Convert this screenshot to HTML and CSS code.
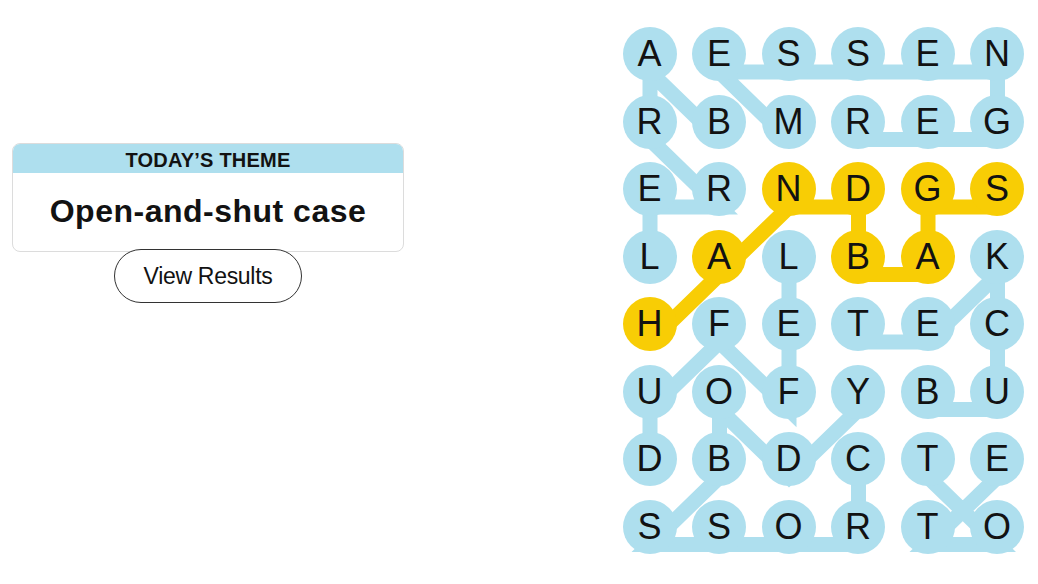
FILE: index.html
```html
<!DOCTYPE html>
<html lang="en">
<head>
<meta charset="utf-8">
<title>Strands</title>
<link rel="stylesheet" href="styles.css">
</head>
<body>
<main class="game">
  <section class="side">
    <div class="theme-card">
      <h2 class="theme-label">TODAY’S THEME</h2>
      <p class="theme-title">Open-and-shut case</p>
    </div>
    <button class="results-btn" type="button">View Results</button>
  </section>
  <section class="board">
    <svg class="paths" width="401.5" height="526.5" viewBox="0 0 401.5 526.5" aria-hidden="true">
      <polyline class="path found" points="96.5,112.5 27,45 27,112.5 96.5,180 27,180 27,247.5"/>
      <polyline class="path found" points="166,112.5 96.5,45 166,45 235.5,45 305,45 374.5,45 374.5,112.5 305,112.5 235.5,112.5"/>
      <polyline class="path found" points="27,450 27,382.5 96.5,315 166,382.5 166,315 166,247.5"/>
      <polyline class="path found" points="305,382.5 374.5,382.5 374.5,315 374.5,247.5 305,315 235.5,315"/>
      <polyline class="path found" points="235.5,450 235.5,517.5 166,517.5 96.5,517.5 27,517.5 96.5,450 96.5,382.5 166,450 235.5,382.5"/>
      <polyline class="path found" points="305,450 374.5,517.5 305,517.5 374.5,450"/>
      <polyline class="path spangram" points="27,315 96.5,247.5 166,180 235.5,180 235.5,247.5 305,247.5 305,180 374.5,180"/>
    </svg>
    <div class="grid">
      <button class="cell">A</button><button class="cell">E</button><button class="cell">S</button><button class="cell">S</button><button class="cell">E</button><button class="cell">N</button>
      <button class="cell">R</button><button class="cell">B</button><button class="cell">M</button><button class="cell">R</button><button class="cell">E</button><button class="cell">G</button>
      <button class="cell">E</button><button class="cell">R</button><button class="cell span">N</button><button class="cell span">D</button><button class="cell span">G</button><button class="cell span">S</button>
      <button class="cell">L</button><button class="cell span">A</button><button class="cell">L</button><button class="cell span">B</button><button class="cell span">A</button><button class="cell">K</button>
      <button class="cell span">H</button><button class="cell">F</button><button class="cell">E</button><button class="cell">T</button><button class="cell">E</button><button class="cell">C</button>
      <button class="cell">U</button><button class="cell">O</button><button class="cell">F</button><button class="cell">Y</button><button class="cell">B</button><button class="cell">U</button>
      <button class="cell">D</button><button class="cell">B</button><button class="cell">D</button><button class="cell">C</button><button class="cell">T</button><button class="cell">E</button>
      <button class="cell">S</button><button class="cell">S</button><button class="cell">O</button><button class="cell">R</button><button class="cell">T</button><button class="cell">O</button>
    </div>
  </section>
</main>
</body>
</html>
```

FILE: styles.css
```css
* {
  box-sizing: border-box;
}

html, body {
  margin: 0;
  background: #ffffff;
}

body {
  font-family: "Liberation Sans", Arial, sans-serif;
  color: #121212;
}

.game {
  display: flex;
  align-items: flex-start;
  padding: 27px 0 0 12px;
}

.side {
  width: 392px;
  margin-top: 116px;
  display: flex;
  flex-direction: column;
  align-items: center;
}

.theme-card {
  width: 392px;
  border: 1px solid #dcdcdc;
  border-radius: 8px;
  overflow: hidden;
  background: #fff;
}

.theme-label {
  margin: 0;
  height: 29px;
  padding-top: 3px;
  background: #aedfee;
  font-size: 20px;
  line-height: 26px;
  font-weight: 700;
  text-align: center;
  letter-spacing: 0.2px;
  color: #121212;
}

.theme-title {
  margin: 0;
  padding: 19px 0 21px;
  font-size: 32px;
  line-height: 38px;
  font-weight: 700;
  text-align: center;
  letter-spacing: 0.5px;
  color: #121212;
}

.results-btn {
  margin-top: -3px;
  width: 188px;
  height: 54px;
  border: 1px solid #333;
  border-radius: 27px;
  background: #fff;
  font-family: "Liberation Sans", Arial, sans-serif;
  font-size: 23px;
  letter-spacing: -0.3px;
  color: #121212;
  padding: 0;
}

.board {
  position: relative;
  margin-left: 218.5px;
}

.paths {
  position: absolute;
  top: 0;
  left: 0;
  overflow: visible;
}

.path {
  fill: none;
  stroke-width: 15;
  stroke-linejoin: miter;
  stroke-linecap: butt;
}

.path.found {
  stroke: #aedfee;
}

.path.spangram {
  stroke: #f8cd05;
}

.grid {
  position: relative;
  display: grid;
  grid-template-columns: repeat(6, 54px);
  grid-auto-rows: 54px;
  column-gap: 15.5px;
  row-gap: 13.5px;
}

.cell {
  width: 54px;
  height: 54px;
  border: 0;
  padding: 0;
  border-radius: 50%;
  background: #aedfee;
  display: flex;
  align-items: center;
  justify-content: center;
  font-family: "Liberation Sans", Arial, sans-serif;
  font-size: 36px;
  color: #121212;
}

.cell.span {
  background: #f8cd05;
}
```
